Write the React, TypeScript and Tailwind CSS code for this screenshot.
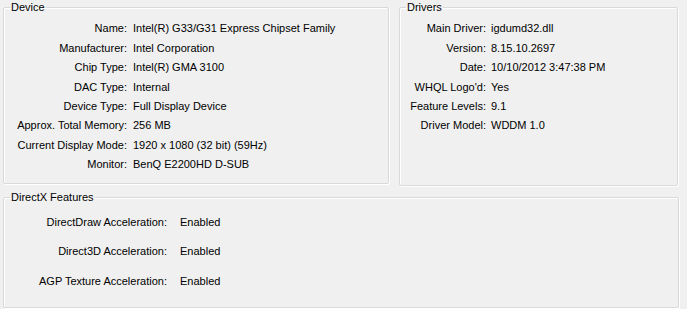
const deviceRows: [string, string][] = [
  ['Name:', 'Intel(R) G33/G31 Express Chipset Family'],
  ['Manufacturer:', 'Intel Corporation'],
  ['Chip Type:', 'Intel(R) GMA 3100'],
  ['DAC Type:', 'Internal'],
  ['Device Type:', 'Full Display Device'],
  ['Approx. Total Memory:', '256 MB'],
  ['Current Display Mode:', '1920 x 1080 (32 bit) (59Hz)'],
  ['Monitor:', 'BenQ E2200HD D-SUB'],
];

const driverRows: [string, string][] = [
  ['Main Driver:', 'igdumd32.dll'],
  ['Version:', '8.15.10.2697'],
  ['Date:', '10/10/2012 3:47:38 PM'],
  ['WHQL Logo\'d:', 'Yes'],
  ['Feature Levels:', '9.1'],
  ['Driver Model:', 'WDDM 1.0'],
];

const featureRows: [string, string][] = [
  ['DirectDraw Acceleration:', 'Enabled'],
  ['Direct3D Acceleration:', 'Enabled'],
  ['AGP Texture Acceleration:', 'Enabled'],
];

// etched group box border, like the classic win32 GroupBox
const groupBox =
  'border border-[#d9d9d9] rounded-[2px] shadow-[1px_1px_0_#ffffff,inset_1px_1px_0_#ffffff] px-[6px] m-0 min-w-0';

function Group({
  title,
  className,
  children,
}: {
  title: string;
  className: string;
  children: React.ReactNode;
}) {
  return (
    <fieldset className={`${groupBox} ${className}`}>
      <legend className="px-[1px] h-[14px] leading-[14px]">{title}</legend>
      {children}
    </fieldset>
  );
}

export default function App() {
  return (
    <div
      className="w-[687px] h-[309px] bg-[#f0f0f0] text-[11px] text-black overflow-hidden pl-[3px] pr-[9px]"
      style={{ fontFamily: '"Liberation Sans", Arial, sans-serif' }}
    >
      <div className="flex items-start gap-[10px]">
        <Group title="Device" className="w-[386px] h-[184px]">
          <div className="grid grid-cols-[117px_1fr] gap-x-[6px] auto-rows-[19.4px] items-center pt-[5px]">
            {deviceRows.map(([label, value]) => (
              <div key={label} className="contents">
                <span className="text-right whitespace-nowrap">{label}</span>
                <span className="whitespace-nowrap">{value}</span>
              </div>
            ))}
          </div>
        </Group>
        <Group title="Drivers" className="w-[279px] h-[186px]">
          <div className="grid grid-cols-[80px_1fr] gap-x-[5px] auto-rows-[19.4px] items-center pt-[5px]">
            {driverRows.map(([label, value]) => (
              <div key={label} className="contents">
                <span className="text-right whitespace-nowrap">{label}</span>
                <span className="whitespace-nowrap">{value}</span>
              </div>
            ))}
          </div>
        </Group>
      </div>
      <Group title="DirectX Features" className="w-[676px] h-[118px] mt-[4px]">
        <div className="grid grid-cols-[157px_1fr] gap-x-[13px] auto-rows-[29.5px] items-center pt-[3px]">
          {featureRows.map(([label, value]) => (
            <div key={label} className="contents">
              <span className="text-right whitespace-nowrap">{label}</span>
              <span className="whitespace-nowrap">{value}</span>
            </div>
          ))}
        </div>
      </Group>
    </div>
  );
}
